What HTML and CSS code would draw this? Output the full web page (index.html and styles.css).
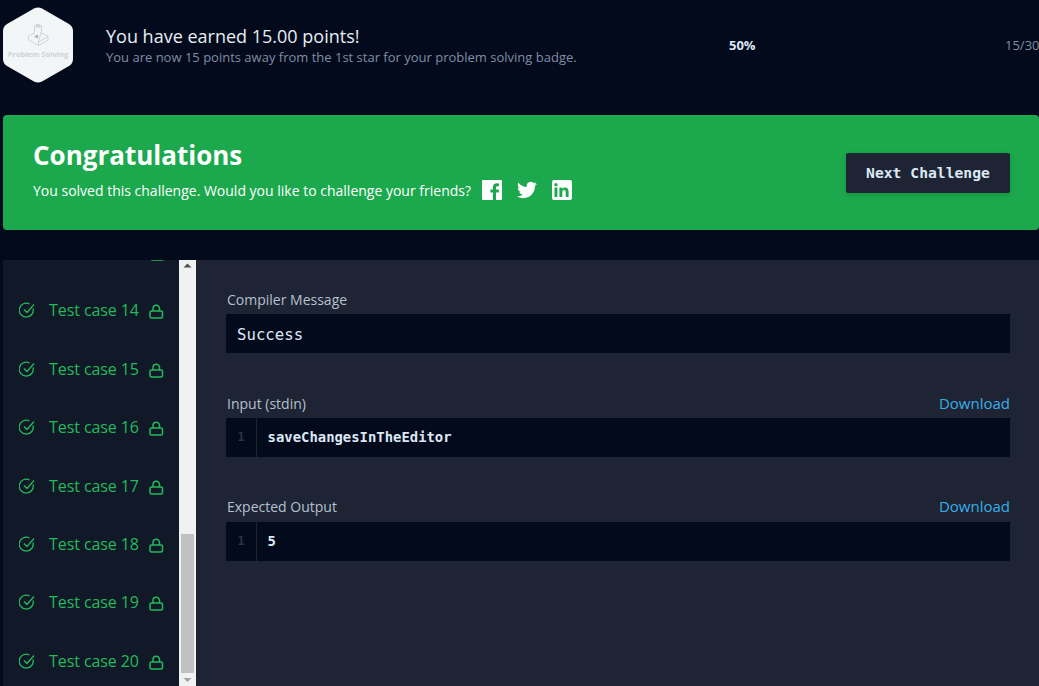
FILE: index.html
```html
<!DOCTYPE html>
<html lang="en">
<head>
<meta charset="utf-8">
<title>Congratulations</title>
<link rel="stylesheet" href="styles.css">
</head>
<body>
<div class="page">
  <header class="earned">
    <svg class="badge" width="70" height="76" viewBox="0 0 70 76">
      <path d="M31 1.500Q35 -0.500 39 1.500L66 17Q70 19.500 70 24V52Q70 56.500 66 59L39 74.500Q35 76.500 31 74.500L4 59Q0 56.500 0 52V24Q0 19.500 4 17Z" fill="#f3f6f7"/>
      <g fill="none" stroke="#cfd3d7" stroke-width="1">
        <path d="M25.500 29.500L32 25.500M38 25.500L45 29.500L35.500 35Z"/>
        <path d="M25.500 29.500V33L35.500 38.500L45 33V29.500"/>
        <path d="M35.500 35V38.500"/>
        <path d="M31.500 25V19L35 17L38.500 19V25"/>
      </g>
      <path d="M31.500 19L35 17L38.500 19L35 21Z" fill="#cfd3d7"/>
      <path d="M31 29.500L35 27.500V31.500Z" fill="#a9aeb3"/>
      <text class="badge-label" x="35" y="50" text-anchor="middle">Problem Solving</text>
    </svg>
    <div class="earned-text">
      <div class="earned-title">You have earned 15.00 points!</div>
      <div class="earned-sub">You are now 15 points away from the 1st star for your problem solving badge.</div>
    </div>
    <div class="percent">50%</div>
    <div class="score">15/30</div>
  </header>

  <section class="banner">
    <div class="banner-text">
      <h1 class="banner-title">Congratulations</h1>
      <div class="banner-row">
        <span>You solved this challenge. Would you like to challenge your friends?</span>
        <svg class="social" width="20" height="20" viewBox="0 0 20 20"><path fill="#fff" d="M1 0H19Q20 0 20 1V19Q20 20 19 20H14V12.400H16.600L17 9.400H14V7.500Q14 6.200 15.500 6.200H17V3.500Q16 3.300 14.800 3.300Q11 3.300 11 7V9.400H8.400V12.400H11V20H1Q0 20 0 19V1Q0 0 1 0Z"/></svg>
        <svg class="social" width="20" height="20" viewBox="0 0 24 24"><path fill="#fff" d="M23.950 4.570a10 10 0 0 1-2.820.77 4.960 4.960 0 0 0 2.160-2.720 9.900 9.900 0 0 1-3.120 1.180 4.920 4.920 0 0 0-8.380 4.480A14 14 0 0 1 1.670 3.150a4.820 4.820 0 0 0-.66 2.480 4.910 4.910 0 0 0 2.180 4.090 4.900 4.900 0 0 1-2.230-.61v.06a4.920 4.920 0 0 0 3.950 4.830 5 5 0 0 1-2.210.08 4.940 4.940 0 0 0 4.600 3.420A9.870 9.870 0 0 1 0 19.540a14 14 0 0 0 7.560 2.210c9.050 0 14-7.500 14-13.980 0-.21 0-.42-.02-.63a9.940 9.940 0 0 0 2.460-2.550z"/></svg>
        <svg class="social" width="20" height="20" viewBox="0 0 20 20"><path fill="#fff" fill-rule="evenodd" d="M2 0H18Q20 0 20 2V18Q20 20 18 20H2Q0 20 0 18V2Q0 0 2 0ZM2.500 7.600V17H5.400V7.600ZM4 3A1.700 1.700 0 1 0 4 6.400 1.700 1.700 0 1 0 4 3ZM7.400 7.600V17H10.300V12.200C10.300 10.800 11 10 12.100 10S13.700 10.800 13.700 12.200V17H16.600V11.600C16.600 8.800 15.200 7.400 13.100 7.400 11.700 7.400 10.800 8.100 10.300 8.900V7.600Z"/></svg>
      </div>
    </div>
    <button class="next-btn" type="button">Next Challenge</button>
  </section>

  <div class="panel">
    <aside class="sidebar">
      <ul class="cases">
        <li class="case case-clipped"><svg class="lock" width="15" height="15" viewBox="0 0 15 15"><rect x="1" y="7" width="12.500" height="7" rx="1.500"/><path d="M4 7V4.500A3.200 3.200 0 0 1 10.500 4.500V7"/></svg></li>
        <li class="case"><svg class="check" width="16" height="16" viewBox="0 0 16 16"><path d="M14 6.500A7 7 0 1 1 10.500 2M5 7.500L8 10.500L15 2.500"/></svg><span class="case-name">Test case 14</span><svg class="lock" width="15" height="15" viewBox="0 0 15 15"><rect x="1" y="7" width="12.500" height="7" rx="1.500"/><path d="M4 7V4.500A3.200 3.200 0 0 1 10.500 4.500V7"/></svg></li>
        <li class="case"><svg class="check" width="16" height="16" viewBox="0 0 16 16"><path d="M14 6.500A7 7 0 1 1 10.500 2M5 7.500L8 10.500L15 2.500"/></svg><span class="case-name">Test case 15</span><svg class="lock" width="15" height="15" viewBox="0 0 15 15"><rect x="1" y="7" width="12.500" height="7" rx="1.500"/><path d="M4 7V4.500A3.200 3.200 0 0 1 10.500 4.500V7"/></svg></li>
        <li class="case"><svg class="check" width="16" height="16" viewBox="0 0 16 16"><path d="M14 6.500A7 7 0 1 1 10.500 2M5 7.500L8 10.500L15 2.500"/></svg><span class="case-name">Test case 16</span><svg class="lock" width="15" height="15" viewBox="0 0 15 15"><rect x="1" y="7" width="12.500" height="7" rx="1.500"/><path d="M4 7V4.500A3.200 3.200 0 0 1 10.500 4.500V7"/></svg></li>
        <li class="case"><svg class="check" width="16" height="16" viewBox="0 0 16 16"><path d="M14 6.500A7 7 0 1 1 10.500 2M5 7.500L8 10.500L15 2.500"/></svg><span class="case-name">Test case 17</span><svg class="lock" width="15" height="15" viewBox="0 0 15 15"><rect x="1" y="7" width="12.500" height="7" rx="1.500"/><path d="M4 7V4.500A3.200 3.200 0 0 1 10.500 4.500V7"/></svg></li>
        <li class="case"><svg class="check" width="16" height="16" viewBox="0 0 16 16"><path d="M14 6.500A7 7 0 1 1 10.500 2M5 7.500L8 10.500L15 2.500"/></svg><span class="case-name">Test case 18</span><svg class="lock" width="15" height="15" viewBox="0 0 15 15"><rect x="1" y="7" width="12.500" height="7" rx="1.500"/><path d="M4 7V4.500A3.200 3.200 0 0 1 10.500 4.500V7"/></svg></li>
        <li class="case"><svg class="check" width="16" height="16" viewBox="0 0 16 16"><path d="M14 6.500A7 7 0 1 1 10.500 2M5 7.500L8 10.500L15 2.500"/></svg><span class="case-name">Test case 19</span><svg class="lock" width="15" height="15" viewBox="0 0 15 15"><rect x="1" y="7" width="12.500" height="7" rx="1.500"/><path d="M4 7V4.500A3.200 3.200 0 0 1 10.500 4.500V7"/></svg></li>
        <li class="case"><svg class="check" width="16" height="16" viewBox="0 0 16 16"><path d="M14 6.500A7 7 0 1 1 10.500 2M5 7.500L8 10.500L15 2.500"/></svg><span class="case-name">Test case 20</span><svg class="lock" width="15" height="15" viewBox="0 0 15 15"><rect x="1" y="7" width="12.500" height="7" rx="1.500"/><path d="M4 7V4.500A3.200 3.200 0 0 1 10.500 4.500V7"/></svg></li>
      </ul>
    </aside>
    <div class="scrollbar">
      <svg class="arrow" width="17" height="14" viewBox="0 0 17 14"><path d="M8.500 3.500L12.500 7.500H4.500Z" fill="#505050"/></svg>
      <div class="track"><div class="thumb"></div></div>
      <svg class="arrow" width="17" height="13" viewBox="0 0 17 13"><path d="M8.500 9L4.500 5H12.500Z" fill="#a3a3a3"/></svg>
    </div>
    <main class="details">
      <div class="block">
        <div class="block-head"><span class="block-label">Compiler Message</span></div>
        <div class="message">Success</div>
      </div>
      <div class="block">
        <div class="block-head"><span class="block-label">Input (stdin)</span><a class="download" href="#">Download</a></div>
        <div class="code"><span class="gutter">1</span><span class="code-text">saveChangesInTheEditor</span></div>
      </div>
      <div class="block">
        <div class="block-head block-head-tight"><span class="block-label">Expected Output</span><a class="download" href="#">Download</a></div>
        <div class="code"><span class="gutter">1</span><span class="code-text">5</span></div>
      </div>
    </main>
  </div>
</div>
</body>
</html>
```
FILE: styles.css
```css
* { box-sizing: border-box; }
html, body { margin: 0; height: 100%; overflow: hidden; background: #030a1b; }
body { font-family: "Open Sans", "Liberation Sans", sans-serif; }
.page { width: 1039px; height: 686px; padding-left: 3px; display: flex; flex-direction: column; overflow: hidden; }

.earned { height: 115px; display: flex; align-items: flex-start; padding-top: 7px; flex: none; }
.badge { flex: none; display: block; }
.badge-label { font: 700 7.500px "Open Sans", sans-serif; fill: #cdd1d5; }
.earned-text { margin-left: 33px; width: 623px; padding-top: 17px; flex: none; }
.earned-title { font-size: 18px; line-height: 24px; color: #e7eef5; }
.earned-sub { font-size: 13px; line-height: 18px; color: #7f8ea6; }
.percent { font-size: 13px; font-weight: 700; color: #dbe8f5; line-height: 16px; padding-top: 30px; width: 276px; flex: none; }
.score { font-size: 13px; color: #7f8ea6; line-height: 16px; padding-top: 30px; white-space: nowrap; }

.banner { width: 1036px; height: 115px; flex: none; background: #1ca94d; border-radius: 4px; display: flex; align-items: center; justify-content: space-between; padding: 0 29px 0 30px; }
.banner-text { color: #fff; padding-bottom: 7px; }
.banner-title { margin: 0; font-size: 26px; line-height: 36px; font-weight: 700; color: #fff; }
.banner-row { display: flex; align-items: center; font-size: 14px; line-height: 20px; margin-top: 8px; color: #fff; }
.social { margin-left: 15px; margin-top: -2px; flex: none; }
.banner-row span + .social { margin-left: 11px; }
.next-btn { width: 164px; height: 40px; border: 0; border-radius: 2px; background: #1e2433; color: #dbe8f5; font: 700 14.700px "DejaVu Sans Mono", "Liberation Mono", monospace; box-shadow: 0 2px 6px rgba(0, 0, 0, 0.15); padding: 0; flex: none; }

.panel { margin-top: 30px; height: 426px; flex: none; display: flex; overflow: hidden; }
.sidebar { width: 176px; flex: none; background: #111827; overflow: hidden; }
.cases { list-style: none; margin: -37.150px 0 0; padding: 0 0 0 16px; }
.case { height: 58.400px; display: flex; align-items: center; color: #22bb5c; font-size: 16px; }
.case-clipped { padding-left: 121px; }
.case-name { margin-left: 14px; white-space: nowrap; letter-spacing: -0.080px; }
.check { flex: none; fill: none; stroke: #22bb5c; stroke-width: 1.300; }
.lock { flex: none; margin-left: 9.800px; margin-top: 3px; fill: none; stroke: #22bb5c; stroke-width: 1.500; }

.scrollbar { width: 17px; flex: none; background: #f1f1f1; display: flex; flex-direction: column; }
.arrow { display: block; flex: none; }
.track { flex: 1; padding: 260px 2px 0; display: flex; }
.thumb { flex: 1; background: #c1c1c1; }

.details { flex: 1; background: #1e2433; padding: 26px 29px 0 30px; }
.block { margin-bottom: 37px; }
.block-head { height: 28px; display: flex; justify-content: space-between; align-items: center; }
.block-head-tight { padding-bottom: 2px; }
.block-label { font-size: 14px; color: #b4c0d0; line-height: 20px; padding-left: 1px; }
.download { font-size: 15px; color: #39aee9; text-decoration: none; line-height: 20px; padding-bottom: 2px; }
.message { height: 39px; background: #030a1b; color: #dbe8f5; font: 15.700px/41px "DejaVu Sans Mono", "Liberation Mono", monospace; padding-left: 11px; }
.code { height: 39px; background: #030a1b; display: flex; align-items: center; }
.gutter { width: 31px; height: 100%; flex: none; border-right: 1px solid #1e2433; color: #2b3446; font: 700 12px/39px "DejaVu Sans Mono", monospace; text-align: center; }
.code-text { margin-left: 10.600px; padding-bottom: 1px; color: #dbe8f5; font: 700 13.900px "DejaVu Sans Mono", "Liberation Mono", monospace; }
```
